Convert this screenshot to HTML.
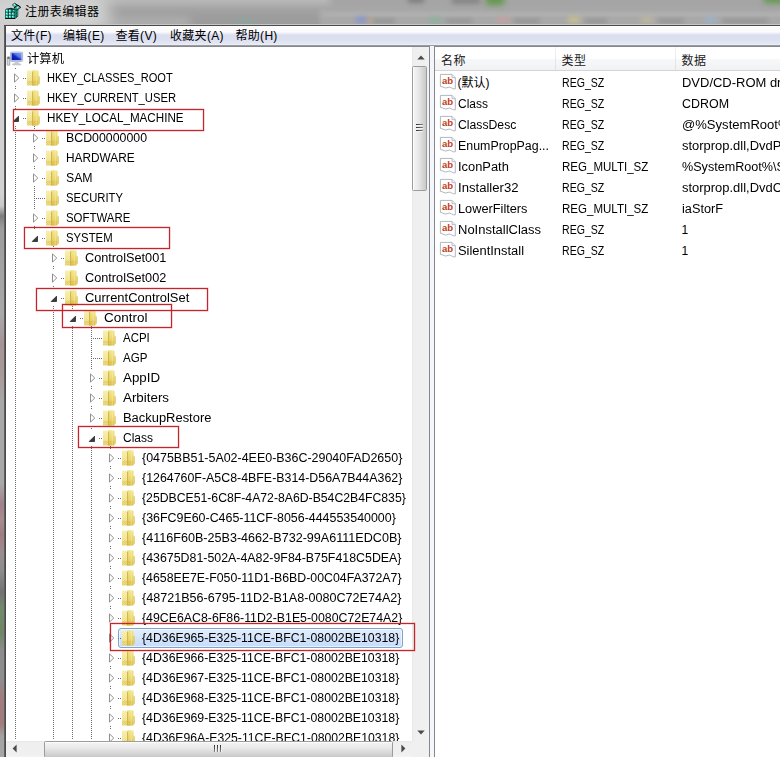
<!DOCTYPE html>
<html lang="zh-CN"><head><meta charset="utf-8"><title>注册表编辑器</title>
<style>
html,body{margin:0;padding:0}
body{width:780px;height:757px;position:relative;overflow:hidden;background:#fff;font:12px/20px 'Liberation Sans','Noto Sans CJK SC',sans-serif;color:#000}
div,span,svg{position:absolute;box-sizing:border-box}
.t{white-space:pre;height:20px;line-height:20px;transform-origin:0 0}
.rr{border:1px solid #c4242a;box-shadow:0 0 0 .4px rgba(196,36,42,.45),inset 0 0 0 .4px rgba(196,36,42,.3)}
.vd{width:1px;background:repeating-linear-gradient(to bottom,#6c6c6c 0 1px,transparent 1px 2px)}
.hd{height:1px;background:repeating-linear-gradient(to right,#6a6a6a 0 1px,transparent 1px 2px)}
</style></head><body>
<svg width="0" height="0" style="left:0;top:0"><defs>
<linearGradient id="fg1" x1="0" y1="0" x2="0" y2="1"><stop offset="0" stop-color="#f7eeae"/><stop offset=".6" stop-color="#f0e28c"/><stop offset="1" stop-color="#e2cb5e"/></linearGradient>
<linearGradient id="fg2" x1="0" y1="0" x2="0" y2="1"><stop offset="0" stop-color="#f3e68e"/><stop offset=".55" stop-color="#ead770"/><stop offset="1" stop-color="#d9bd48"/></linearGradient>
<pattern id="hatch" width="2" height="2" patternUnits="userSpaceOnUse"><rect width="1" height="1" fill="#fffbe0"/><rect x="1" y="1" width="1" height="1" fill="#fffbe0"/></pattern>
<linearGradient id="scr" x1="0" y1="1" x2="1" y2="0"><stop offset="0" stop-color="#0614a8"/><stop offset="0.45" stop-color="#1428c4"/><stop offset="0.6" stop-color="#5674e0"/><stop offset="1" stop-color="#86a2f0"/></linearGradient>
<symbol id="folder" viewBox="0 0 16 18">
 <path d="M2 1.6h5.6v14.8h-5.6z" fill="url(#fg1)"/>
 <path d="M2 1.6h5.6v14.8h-5.6z" fill="url(#hatch)" opacity=".25"/>
 <path d="M7.5 1.1l5.2.4q.9.1.9 1v13q0 .9-.9 1l-5.2.3z" fill="url(#fg2)"/>
 <path d="M13.4 6.8q1.4.1 1.4 1.3v6.200q0 1.100-1.4 1.200z" fill="#e3c85c"/>
 <path d="M7.6 2.500v14" stroke="#cfae3c" stroke-width="1" opacity=".9"/>
 <path d="M2.300 12.900h11.200" stroke="#d2b23e" stroke-width="1" opacity=".45"/>
 <path d="M11.300 2v14.400" stroke="#faf3c4" stroke-width=".8" opacity=".5"/>
</symbol>
<symbol id="tc" viewBox="0 0 8 10"><path d="M1.5 .9v8.2l4.3-4.1z" fill="#fff" stroke="#909090" stroke-width="1"/></symbol>
<symbol id="te" viewBox="0 0 8 8"><path d="M6.5 1.2v5.3h-5.3z" fill="#3c3c3c" stroke="#262626" stroke-width=".8"/></symbol>
</defs></svg>
<div style="left:0;top:0;width:780px;height:26px;background:linear-gradient(to bottom,#b8b8b8 0,#b0b0b0 4px,#a4a4a4 9px,#9e9e9e 15px,#9b9b9b 24px)"></div><div style="left:320px;top:11px;width:480px;height:8px;background:#b4b4b4;filter:blur(3px)"></div><div style="left:320px;top:18px;width:480px;height:8px;background:#a9a9a9;filter:blur(2px)"></div><div style="left:330px;top:-5px;width:470px;height:13px;background:#a4a4a4;filter:blur(3px)"></div><div style="left:100px;top:17px;width:90px;height:10px;background:#b0b0b0;filter:blur(4px)"></div><div style="left:356px;top:17px;width:12px;height:6px;background:#7f92d8;filter:blur(2.500px);opacity:.8"></div><div style="left:373px;top:18.500px;width:22px;height:4px;background:#8c8c8c;filter:blur(2px);opacity:.75"></div><div style="left:429px;top:17px;width:12px;height:6px;background:#86b49a;filter:blur(2.500px);opacity:.8"></div><div style="left:446px;top:18.500px;width:26px;height:4px;background:#8c8c8c;filter:blur(2px);opacity:.75"></div><div style="left:497px;top:17px;width:12px;height:6px;background:#cfa0a0;filter:blur(2.500px);opacity:.8"></div><div style="left:514px;top:18.500px;width:26px;height:4px;background:#8c8c8c;filter:blur(2px);opacity:.75"></div><div style="left:568px;top:17px;width:12px;height:6px;background:#d2c48c;filter:blur(2.500px);opacity:.8"></div><div style="left:585px;top:18.500px;width:22px;height:4px;background:#8c8c8c;filter:blur(2px);opacity:.75"></div><div style="left:641px;top:17px;width:12px;height:6px;background:#c4bc9c;filter:blur(2.500px);opacity:.8"></div><div style="left:658px;top:18.500px;width:26px;height:4px;background:#8c8c8c;filter:blur(2px);opacity:.75"></div><div style="left:705px;top:17px;width:12px;height:6px;background:#9cb4cc;filter:blur(2.500px);opacity:.8"></div><div style="left:722px;top:18.500px;width:46px;height:4px;background:#8c8c8c;filter:blur(2px);opacity:.75"></div><div style="left:366px;top:18px;width:6px;height:5px;background:#c8a078;filter:blur(2px);opacity:.7"></div><div style="left:236px;top:19px;width:18px;height:6px;background:#88a8a0;filter:blur(3px);opacity:.8"></div><div style="left:486px;top:-6px;width:18px;height:11px;background:#62984a;filter:blur(3px)"></div><div style="left:764px;top:-6px;width:30px;height:9px;background:#62984a;filter:blur(3px)"></div><div style="left:408px;top:-5px;width:16px;height:8px;background:#808080;filter:blur(2.500px)"></div><div style="left:452px;top:-3px;width:28px;height:7px;background:#858585;filter:blur(2.500px)"></div><div style="left:-20px;top:-6px;width:130px;height:40px;background:#d6d6d6;filter:blur(8px);opacity:.95;border-radius:20px"></div><div style="left:0;top:24px;width:780px;height:1px;background:#c6c6c6"></div><div style="left:0;top:24px;width:5px;height:733px;background:linear-gradient(to bottom,#cfcfcf 0,#d2d2d2 170px,#c8c8c8 182px,#7c7c7c 192px,#9c9c9c 204px,#a9a9a9 290px,#a49496 320px,#a99a9a 350px,#a8a8a8 380px,#a8a8a8 460px,#a0808a 480px,#a88c90 495px,#a07c84 510px,#9c8c8e 528px,#8e8e8e 545px,#727272 568px,#728a6a 585px,#6e8666 610px,#8c8c8c 625px,#8e8e8e 655px,#a07e7e 672px,#a07c7c 700px,#a2a2a2 712px,#a6a6a6 733px)"></div><div style="left:4px;top:25px;width:2px;height:732px;background:linear-gradient(to right,#6a6a6a,#3f3f3f)"></div><div style="left:4px;top:25px;width:776px;height:1px;background:#4a4a4a"></div><svg style="left:2px;top:1px" width="20" height="20" viewBox="0 0 20 20">
<path d="M3.200 9.400Q3.200 7.800 5 7.500L9.200 6.700 12.600 8 16.200 6.800V15.300L12.900 17.900H3.200Z" fill="#06322e"/>
<path d="M3.200 17.300H12.900V18H3.200Z" fill="#000"/>
<rect x="3.9" y="8.7" width="2.4" height="2.3" fill="#2fc4b0"/><path d="M3.9 10.399999999999999L5.8 8.7h-1.900z" fill="#b9fff2"/><rect x="7.0" y="8.7" width="2.4" height="2.3" fill="#2fc4b0"/><path d="M7.0 10.399999999999999L8.9 8.7h-1.900z" fill="#b9fff2"/><rect x="3.9" y="11.7" width="2.4" height="2.3" fill="#2fc4b0"/><path d="M3.9 13.399999999999999L5.8 11.7h-1.900z" fill="#b9fff2"/><rect x="7.0" y="11.7" width="2.4" height="2.3" fill="#2fc4b0"/><path d="M7.0 13.399999999999999L8.9 11.7h-1.900z" fill="#b9fff2"/><rect x="10.1" y="11.7" width="2.4" height="2.3" fill="#2fc4b0"/><path d="M10.1 13.399999999999999L12.0 11.7h-1.900z" fill="#b9fff2"/><rect x="3.9" y="14.7" width="2.4" height="2.3" fill="#2fc4b0"/><path d="M3.9 16.4L5.8 14.7h-1.900z" fill="#b9fff2"/><rect x="7.0" y="14.7" width="2.4" height="2.3" fill="#2fc4b0"/><path d="M7.0 16.4L8.9 14.7h-1.900z" fill="#b9fff2"/><rect x="10.1" y="14.7" width="2.4" height="2.3" fill="#2fc4b0"/><path d="M10.1 16.4L12.0 14.7h-1.900z" fill="#b9fff2"/>
<path d="M10.100 8.600h2.600v2.400h-2.600z" fill="#1a7c6c"/><path d="M10.900 9.300l1.400 1.300v-1.500z" fill="#d6fff8"/>
<path d="M13.200 8.800L15.900 7.600V15.100L13.200 17.200Z" fill="#27957f"/>
<path d="M14.500 8.200V16.300" stroke="#0a433e" stroke-width=".8" stroke-dasharray="2.300 .7"/>
<path d="M10.300 3.900L12.700 2.200 15.300 4.300 13 6.300Z" fill="#55e2cb" stroke="#052a27" stroke-width=".7"/>
<path d="M11.400 3.900l1.300-.9.800.7z" fill="#d6fff8"/>
<path d="M12.200 7.600L13 6.300 15.400 4.300 18.700 6.500 16.200 8.300 16 8.600 13.300 9Z" fill="#2aa18c" stroke="#052a27" stroke-width=".7"/>
<path d="M14.400 6.700l1.700-1.500 1 .700-1.700 1.500z" fill="#a8f5e6"/>
<path d="M13.300 2.800l2.300 1.700M15.700 3.900l3 2.300M11.700 7.200l2-1.800" stroke="#000" stroke-width=".9" fill="none"/>
</svg><span class="t" style="left:25px;top:2px;letter-spacing:.4px">注册表编辑器</span><div style="left:6px;top:26px;width:774px;height:20px;background:linear-gradient(to bottom,#fdfdfe 0,#fbfbfd 6px,#e9ecf6 7.500px,#dadeef 9px,#dbdff0 13px,#e2e6f3 17px,#eceef7 19px,#9c9c9c 19px,#9c9c9c 20px)"></div><span class="t" style="left:11px;top:26px;letter-spacing:.3px">文件(F)</span><span class="t" style="left:63px;top:26px;letter-spacing:.3px">编辑(E)</span><span class="t" style="left:115.5px;top:26px;letter-spacing:.3px">查看(V)</span><span class="t" style="left:170px;top:26px;letter-spacing:.3px">收藏夹(A)</span><span class="t" style="left:235.5px;top:26px;letter-spacing:.3px">帮助(H)</span><div style="left:6px;top:46px;width:774px;height:711px;background:#f5f6fa"></div><div style="left:6px;top:46px;width:424px;height:712px;background:#fff;border:1px solid #828790;border-left:none;border-bottom:none"></div><div style="left:434px;top:46px;width:350px;height:712px;background:#fff;border:1px solid #828790"></div><div class="vd" style="left:15px;top:68px;height:672px"></div><div class="vd" style="left:34px;top:126px;height:112px"></div><div class="vd" style="left:53px;top:246px;height:494px"></div><div class="vd" style="left:72px;top:306px;height:434px"></div><div class="vd" style="left:91px;top:326px;height:414px"></div><div class="vd" style="left:110px;top:446px;height:294px"></div><div style="left:118px;top:628px;width:285px;height:20px;border:1px solid #7da2ce;border-radius:3px;background:linear-gradient(to bottom,#e3eefc,#c6dcfb);box-shadow:inset 0 0 0 1px rgba(255,255,255,.6)"></div><svg style="left:6px;top:50.8px" width="18" height="16" viewBox="0 0 18 16">
<rect x="4.6" y="1.1" width="12" height="9.3" rx=".8" fill="#dfe7f7" stroke="#93a4c8" stroke-width=".8"/>
<rect x="5.6" y="2" width="10" height="7.2" fill="url(#scr)"/>
<path d="M9 10.6h3.4l.6 2.2h-4.6z" fill="#c9ccd2"/><path d="M7.2 12.8h7q.6 0 .6.7v.4h-8.2v-.4q0-.7.6-.7z" fill="#d8dade" stroke="#a9adb6" stroke-width=".5"/>
<rect x="1.2" y="5.8" width="2.6" height="8.4" rx=".5" fill="#d4d6da" stroke="#8e9299" stroke-width=".7"/>
<rect x="1.5" y="6.2" width="2" height="1.5" fill="#3c5c3c"/>
</svg><span class="t" style="left:27px;top:48.5px;transform:scaleX(1.0273);">计算机</span><div class="hd" style="left:23px;top:78px;width:3px"></div><div style="left:11px;top:70px;width:10px;height:16px;background:#fff"></div><svg style="left:13px;top:73px" width="8" height="10"><use href="#tc"/></svg><svg style="left:25px;top:69px" width="16" height="18"><use href="#folder"/></svg><span class="t" style="left:46.7px;top:68px;transform:scaleX(0.9238);">HKEY_CLASSES_ROOT</span><div class="hd" style="left:23px;top:98px;width:3px"></div><div style="left:11px;top:90px;width:10px;height:16px;background:#fff"></div><svg style="left:13px;top:93px" width="8" height="10"><use href="#tc"/></svg><svg style="left:25px;top:89px" width="16" height="18"><use href="#folder"/></svg><span class="t" style="left:46.7px;top:88px;transform:scaleX(0.9346);">HKEY_CURRENT_USER</span><div class="hd" style="left:23px;top:118px;width:3px"></div><div style="left:11px;top:110px;width:10px;height:16px;background:#fff"></div><svg style="left:12px;top:115px" width="8" height="8"><use href="#te"/></svg><svg style="left:25px;top:109px" width="16" height="18"><use href="#folder"/></svg><span class="t" style="left:46.7px;top:108px;transform:scaleX(0.9707);">HKEY_LOCAL_MACHINE</span><div class="hd" style="left:42px;top:138px;width:3px"></div><div style="left:30px;top:130px;width:10px;height:16px;background:#fff"></div><svg style="left:32px;top:133px" width="8" height="10"><use href="#tc"/></svg><svg style="left:44px;top:129px" width="16" height="18"><use href="#folder"/></svg><span class="t" style="left:66px;top:128px;transform:scaleX(1.0288);">BCD00000000</span><div class="hd" style="left:42px;top:158px;width:3px"></div><div style="left:30px;top:150px;width:10px;height:16px;background:#fff"></div><svg style="left:32px;top:153px" width="8" height="10"><use href="#tc"/></svg><svg style="left:44px;top:149px" width="16" height="18"><use href="#folder"/></svg><span class="t" style="left:66px;top:148px;transform:scaleX(0.9862);">HARDWARE</span><div class="hd" style="left:42px;top:178px;width:3px"></div><div style="left:30px;top:170px;width:10px;height:16px;background:#fff"></div><svg style="left:32px;top:173px" width="8" height="10"><use href="#tc"/></svg><svg style="left:44px;top:169px" width="16" height="18"><use href="#folder"/></svg><span class="t" style="left:66px;top:168px;transform:scaleX(1.0225);">SAM</span><div class="hd" style="left:34px;top:198px;width:11px"></div><svg style="left:44px;top:189px" width="16" height="18"><use href="#folder"/></svg><span class="t" style="left:66px;top:188px;transform:scaleX(0.9392);">SECURITY</span><div class="hd" style="left:42px;top:218px;width:3px"></div><div style="left:30px;top:210px;width:10px;height:16px;background:#fff"></div><svg style="left:32px;top:213px" width="8" height="10"><use href="#tc"/></svg><svg style="left:44px;top:209px" width="16" height="18"><use href="#folder"/></svg><span class="t" style="left:66px;top:208px;transform:scaleX(0.9517);">SOFTWARE</span><div class="hd" style="left:42px;top:238px;width:3px"></div><div style="left:30px;top:230px;width:10px;height:16px;background:#fff"></div><svg style="left:31px;top:235px" width="8" height="8"><use href="#te"/></svg><svg style="left:44px;top:229px" width="16" height="18"><use href="#folder"/></svg><span class="t" style="left:66px;top:228px;transform:scaleX(0.9444);">SYSTEM</span><div class="hd" style="left:61px;top:258px;width:3px"></div><div style="left:49px;top:250px;width:10px;height:16px;background:#fff"></div><svg style="left:51px;top:253px" width="8" height="10"><use href="#tc"/></svg><svg style="left:63px;top:249px" width="16" height="18"><use href="#folder"/></svg><span class="t" style="left:85px;top:248px;transform:scaleX(1.0597);">ControlSet001</span><div class="hd" style="left:61px;top:278px;width:3px"></div><div style="left:49px;top:270px;width:10px;height:16px;background:#fff"></div><svg style="left:51px;top:273px" width="8" height="10"><use href="#tc"/></svg><svg style="left:63px;top:269px" width="16" height="18"><use href="#folder"/></svg><span class="t" style="left:85px;top:268px;transform:scaleX(1.0597);">ControlSet002</span><div class="hd" style="left:61px;top:298px;width:3px"></div><div style="left:49px;top:290px;width:10px;height:16px;background:#fff"></div><svg style="left:50px;top:295px" width="8" height="8"><use href="#te"/></svg><svg style="left:63px;top:289px" width="16" height="18"><use href="#folder"/></svg><span class="t" style="left:85px;top:288px;transform:scaleX(1.0784);">CurrentControlSet</span><div class="hd" style="left:80px;top:318px;width:3px"></div><div style="left:68px;top:310px;width:10px;height:16px;background:#fff"></div><svg style="left:69px;top:315px" width="8" height="8"><use href="#te"/></svg><svg style="left:82px;top:309px" width="16" height="18"><use href="#folder"/></svg><span class="t" style="left:104px;top:308px;transform:scaleX(1.1218);">Control</span><div class="hd" style="left:91px;top:338px;width:11px"></div><svg style="left:101px;top:329px" width="16" height="18"><use href="#folder"/></svg><span class="t" style="left:123px;top:328px;transform:scaleX(0.953);">ACPI</span><div class="hd" style="left:91px;top:358px;width:11px"></div><svg style="left:101px;top:349px" width="16" height="18"><use href="#folder"/></svg><span class="t" style="left:123px;top:348px;transform:scaleX(0.9628);">AGP</span><div class="hd" style="left:99px;top:378px;width:3px"></div><div style="left:87px;top:370px;width:10px;height:16px;background:#fff"></div><svg style="left:89px;top:373px" width="8" height="10"><use href="#tc"/></svg><svg style="left:101px;top:369px" width="16" height="18"><use href="#folder"/></svg><span class="t" style="left:123px;top:368px;transform:scaleX(1.1091);">AppID</span><div class="hd" style="left:99px;top:398px;width:3px"></div><div style="left:87px;top:390px;width:10px;height:16px;background:#fff"></div><svg style="left:89px;top:393px" width="8" height="10"><use href="#tc"/></svg><svg style="left:101px;top:389px" width="16" height="18"><use href="#folder"/></svg><span class="t" style="left:123px;top:388px;transform:scaleX(1.1126);">Arbiters</span><div class="hd" style="left:99px;top:418px;width:3px"></div><div style="left:87px;top:410px;width:10px;height:16px;background:#fff"></div><svg style="left:89px;top:413px" width="8" height="10"><use href="#tc"/></svg><svg style="left:101px;top:409px" width="16" height="18"><use href="#folder"/></svg><span class="t" style="left:123px;top:408px;transform:scaleX(1.0774);">BackupRestore</span><div class="hd" style="left:99px;top:438px;width:3px"></div><div style="left:87px;top:430px;width:10px;height:16px;background:#fff"></div><svg style="left:88px;top:435px" width="8" height="8"><use href="#te"/></svg><svg style="left:101px;top:429px" width="16" height="18"><use href="#folder"/></svg><span class="t" style="left:123px;top:428px;transform:scaleX(0.9995);">Class</span><div class="hd" style="left:118px;top:458px;width:3px"></div><div style="left:106px;top:450px;width:10px;height:16px;background:#fff"></div><svg style="left:108px;top:453px" width="8" height="10"><use href="#tc"/></svg><svg style="left:120px;top:449px" width="16" height="18"><use href="#folder"/></svg><span class="t" style="left:142px;top:448px;transform:scaleX(1.0376);">{0475BB51-5A02-4EE0-B36C-29040FAD2650}</span><div class="hd" style="left:118px;top:478px;width:3px"></div><div style="left:106px;top:470px;width:10px;height:16px;background:#fff"></div><svg style="left:108px;top:473px" width="8" height="10"><use href="#tc"/></svg><svg style="left:120px;top:469px" width="16" height="18"><use href="#folder"/></svg><span class="t" style="left:142px;top:468px;transform:scaleX(1.0322);">{1264760F-A5C8-4BFE-B314-D56A7B44A362}</span><div class="hd" style="left:118px;top:498px;width:3px"></div><div style="left:106px;top:490px;width:10px;height:16px;background:#fff"></div><svg style="left:108px;top:493px" width="8" height="10"><use href="#tc"/></svg><svg style="left:120px;top:489px" width="16" height="18"><use href="#folder"/></svg><span class="t" style="left:142px;top:488px;transform:scaleX(1.0193);">{25DBCE51-6C8F-4A72-8A6D-B54C2B4FC835}</span><div class="hd" style="left:118px;top:518px;width:3px"></div><div style="left:106px;top:510px;width:10px;height:16px;background:#fff"></div><svg style="left:108px;top:513px" width="8" height="10"><use href="#tc"/></svg><svg style="left:120px;top:509px" width="16" height="18"><use href="#folder"/></svg><span class="t" style="left:142px;top:508px;transform:scaleX(1.0347);">{36FC9E60-C465-11CF-8056-444553540000}</span><div class="hd" style="left:118px;top:538px;width:3px"></div><div style="left:106px;top:530px;width:10px;height:16px;background:#fff"></div><svg style="left:108px;top:533px" width="8" height="10"><use href="#tc"/></svg><svg style="left:120px;top:529px" width="16" height="18"><use href="#folder"/></svg><span class="t" style="left:142px;top:528px;transform:scaleX(1.0484);">{4116F60B-25B3-4662-B732-99A6111EDC0B}</span><div class="hd" style="left:118px;top:558px;width:3px"></div><div style="left:106px;top:550px;width:10px;height:16px;background:#fff"></div><svg style="left:108px;top:553px" width="8" height="10"><use href="#tc"/></svg><svg style="left:120px;top:549px" width="16" height="18"><use href="#folder"/></svg><span class="t" style="left:142px;top:548px;transform:scaleX(1.0317);">{43675D81-502A-4A82-9F84-B75F418C5DEA}</span><div class="hd" style="left:118px;top:578px;width:3px"></div><div style="left:106px;top:570px;width:10px;height:16px;background:#fff"></div><svg style="left:108px;top:573px" width="8" height="10"><use href="#tc"/></svg><svg style="left:120px;top:569px" width="16" height="18"><use href="#folder"/></svg><span class="t" style="left:142px;top:568px;transform:scaleX(1.0273);">{4658EE7E-F050-11D1-B6BD-00C04FA372A7}</span><div class="hd" style="left:118px;top:598px;width:3px"></div><div style="left:106px;top:590px;width:10px;height:16px;background:#fff"></div><svg style="left:108px;top:593px" width="8" height="10"><use href="#tc"/></svg><svg style="left:120px;top:589px" width="16" height="18"><use href="#folder"/></svg><span class="t" style="left:142px;top:588px;transform:scaleX(1.0493);">{48721B56-6795-11D2-B1A8-0080C72E74A2}</span><div class="hd" style="left:118px;top:618px;width:3px"></div><div style="left:106px;top:610px;width:10px;height:16px;background:#fff"></div><svg style="left:108px;top:613px" width="8" height="10"><use href="#tc"/></svg><svg style="left:120px;top:609px" width="16" height="18"><use href="#folder"/></svg><span class="t" style="left:142px;top:608px;transform:scaleX(1.0277);">{49CE6AC8-6F86-11D2-B1E5-0080C72E74A2}</span><div class="hd" style="left:118px;top:638px;width:3px"></div><div style="left:106px;top:630px;width:10px;height:16px;background:#fff"></div><svg style="left:108px;top:633px" width="8" height="10"><use href="#tc"/></svg><svg style="left:120px;top:629px" width="16" height="18"><use href="#folder"/></svg><span class="t" style="left:142px;top:628px;transform:scaleX(1.0239);">{4D36E965-E325-11CE-BFC1-08002BE10318}</span><div class="hd" style="left:118px;top:658px;width:3px"></div><div style="left:106px;top:650px;width:10px;height:16px;background:#fff"></div><svg style="left:108px;top:653px" width="8" height="10"><use href="#tc"/></svg><svg style="left:120px;top:649px" width="16" height="18"><use href="#folder"/></svg><span class="t" style="left:142px;top:648px;transform:scaleX(1.0239);">{4D36E966-E325-11CE-BFC1-08002BE10318}</span><div class="hd" style="left:118px;top:678px;width:3px"></div><div style="left:106px;top:670px;width:10px;height:16px;background:#fff"></div><svg style="left:108px;top:673px" width="8" height="10"><use href="#tc"/></svg><svg style="left:120px;top:669px" width="16" height="18"><use href="#folder"/></svg><span class="t" style="left:142px;top:668px;transform:scaleX(1.0239);">{4D36E967-E325-11CE-BFC1-08002BE10318}</span><div class="hd" style="left:118px;top:698px;width:3px"></div><div style="left:106px;top:690px;width:10px;height:16px;background:#fff"></div><svg style="left:108px;top:693px" width="8" height="10"><use href="#tc"/></svg><svg style="left:120px;top:689px" width="16" height="18"><use href="#folder"/></svg><span class="t" style="left:142px;top:688px;transform:scaleX(1.0239);">{4D36E968-E325-11CE-BFC1-08002BE10318}</span><div class="hd" style="left:118px;top:718px;width:3px"></div><div style="left:106px;top:710px;width:10px;height:16px;background:#fff"></div><svg style="left:108px;top:713px" width="8" height="10"><use href="#tc"/></svg><svg style="left:120px;top:709px" width="16" height="18"><use href="#folder"/></svg><span class="t" style="left:142px;top:708px;transform:scaleX(1.0239);">{4D36E969-E325-11CE-BFC1-08002BE10318}</span><div class="hd" style="left:118px;top:738px;width:3px"></div><div style="left:106px;top:730px;width:10px;height:16px;background:#fff"></div><svg style="left:108px;top:733px" width="8" height="10"><use href="#tc"/></svg><svg style="left:120px;top:729px" width="16" height="18"><use href="#folder"/></svg><span class="t" style="left:142px;top:728px;transform:scaleX(1.0185);">{4D36E96A-E325-11CE-BFC1-08002BE10318}</span><div style="left:412px;top:47px;width:17px;height:694px;background:linear-gradient(to right,#e8e8e8,#efefef 2px,#f0f0f0 14px,#f3f3f3)"></div><svg style="left:417px;top:55px" width="8" height="5" viewBox="0 0 8 5"><path d="M.3 4.500L4 .6 7.700 4.500z" fill="#4a4a4a"/></svg><svg style="left:417px;top:730px" width="8" height="5" viewBox="0 0 8 5"><path d="M.3 .5L4 4.400 7.700 .5z" fill="#4a4a4a"/></svg><div style="left:412px;top:66px;width:15px;height:125px;border:1px solid #9c9c9c;border-radius:1.500px;background:linear-gradient(to right,#f5f5f5,#e9e9e9 40%,#d6d6d6 75%,#c9c9c9);box-shadow:inset 1px 0 0 rgba(255,255,255,.7)"></div><div style="left:416px;top:124px;width:7px;height:2px;background:linear-gradient(to right,#2a2a2a,#8a8a8a);border-bottom:1px solid #f4f4f4"></div><div style="left:416px;top:127px;width:7px;height:2px;background:linear-gradient(to right,#2a2a2a,#8a8a8a);border-bottom:1px solid #f4f4f4"></div><div style="left:416px;top:130px;width:7px;height:2px;background:linear-gradient(to right,#2a2a2a,#8a8a8a);border-bottom:1px solid #f4f4f4"></div><div style="left:6px;top:741px;width:406px;height:16px;background:linear-gradient(to bottom,#e8e8e8,#efefef 2px,#f0f0f0 13px,#f3f3f3)"></div><svg style="left:12px;top:744px" width="5" height="9" viewBox="0 0 5 9"><path d="M4.600 .4L.6 4.500 4.600 8.600z" fill="#4a4a4a"/></svg><svg style="left:401px;top:744px" width="5" height="9" viewBox="0 0 5 9"><path d="M.4 .4L4.400 4.500 .4 8.600z" fill="#4a4a4a"/></svg><div style="left:44px;top:741px;width:349px;height:17px;border:1px solid #9c9c9c;border-radius:1.500px;background:linear-gradient(to bottom,#f5f5f5,#e9e9e9 40%,#d6d6d6 75%,#c9c9c9);box-shadow:inset 0 1px 0 rgba(255,255,255,.7)"></div><div style="left:214px;top:745px;width:2px;height:7px;background:linear-gradient(to bottom,#2a2a2a,#8a8a8a);border-right:1px solid #f4f4f4"></div><div style="left:217px;top:745px;width:2px;height:7px;background:linear-gradient(to bottom,#2a2a2a,#8a8a8a);border-right:1px solid #f4f4f4"></div><div style="left:220px;top:745px;width:2px;height:7px;background:linear-gradient(to bottom,#2a2a2a,#8a8a8a);border-right:1px solid #f4f4f4"></div><div style="left:412px;top:741px;width:17px;height:16px;background:#f0f0f0"></div><div style="left:435px;top:47px;width:345px;height:24px;background:linear-gradient(to bottom,#fff 0,#fff 50%,#f7f8fa 51%,#f1f2f4 100%);border-bottom:1px solid #d5d5d5"></div><div style="left:555px;top:47px;width:1px;height:23px;background:linear-gradient(to bottom,#f2f2f2,#dedfe1)"></div><div style="left:675px;top:47px;width:1px;height:23px;background:linear-gradient(to bottom,#f2f2f2,#dedfe1)"></div><span class="t" style="left:441px;top:50.600px;letter-spacing:.5px;color:#1a1a1a">名称</span><span class="t" style="left:561.5px;top:50.600px;letter-spacing:.5px;color:#1a1a1a">类型</span><span class="t" style="left:681.5px;top:50.600px;letter-spacing:.5px;color:#1a1a1a">数据</span><svg style="left:439px;top:73px" width="18" height="18" viewBox="0 0 18 18">
<path d="M1.4 1.4H13L16.3 4.7V15.9Q14.2 16.2 12.6 14.9 10.8 13.5 9 14.4 6.8 15.6 5 14.6 3.2 13.5 1.4 13.4Z" fill="#fff" stroke="#a9afb7" stroke-width=".9"/>
<path d="M13 1.4V4.7H16.3" fill="#f1f3f6" stroke="#a9afb7" stroke-width=".8"/>
<text x="2.9" y="10.8" font-family="Liberation Sans, sans-serif" font-weight="bold" font-size="9.6" fill="#c23f22" textLength="11.2" lengthAdjust="spacingAndGlyphs">ab</text>
</svg><span class="t" style="left:457.500px;top:73px;transform:scaleX(1.0);">(默认)</span><span class="t" style="left:561.700px;top:73px;transform:scaleX(0.881);">REG_SZ</span><span class="t" style="left:681.600px;top:73px;transform:scaleX(1.0808);">DVD/CD-ROM drives</span><svg style="left:439px;top:94px" width="18" height="18" viewBox="0 0 18 18">
<path d="M1.4 1.4H13L16.3 4.7V15.9Q14.2 16.2 12.6 14.9 10.8 13.5 9 14.4 6.8 15.6 5 14.6 3.2 13.5 1.4 13.4Z" fill="#fff" stroke="#a9afb7" stroke-width=".9"/>
<path d="M13 1.4V4.7H16.3" fill="#f1f3f6" stroke="#a9afb7" stroke-width=".8"/>
<text x="2.9" y="10.8" font-family="Liberation Sans, sans-serif" font-weight="bold" font-size="9.6" fill="#c23f22" textLength="11.2" lengthAdjust="spacingAndGlyphs">ab</text>
</svg><span class="t" style="left:457.500px;top:94px;transform:scaleX(0.9995);">Class</span><span class="t" style="left:561.700px;top:94px;transform:scaleX(0.881);">REG_SZ</span><span class="t" style="left:681.600px;top:94px;transform:scaleX(1.0369);">CDROM</span><svg style="left:439px;top:115px" width="18" height="18" viewBox="0 0 18 18">
<path d="M1.4 1.4H13L16.3 4.7V15.9Q14.2 16.2 12.6 14.9 10.8 13.5 9 14.4 6.8 15.6 5 14.6 3.2 13.5 1.4 13.4Z" fill="#fff" stroke="#a9afb7" stroke-width=".9"/>
<path d="M13 1.4V4.7H16.3" fill="#f1f3f6" stroke="#a9afb7" stroke-width=".8"/>
<text x="2.9" y="10.8" font-family="Liberation Sans, sans-serif" font-weight="bold" font-size="9.6" fill="#c23f22" textLength="11.2" lengthAdjust="spacingAndGlyphs">ab</text>
</svg><span class="t" style="left:457.500px;top:115px;transform:scaleX(1.0181);">ClassDesc</span><span class="t" style="left:561.700px;top:115px;transform:scaleX(0.881);">REG_SZ</span><span class="t" style="left:681.600px;top:115px;transform:scaleX(1.0882);">@%SystemRoot%\System32\StorProp.dll,-17001</span><svg style="left:439px;top:136px" width="18" height="18" viewBox="0 0 18 18">
<path d="M1.4 1.4H13L16.3 4.7V15.9Q14.2 16.2 12.6 14.9 10.8 13.5 9 14.4 6.8 15.6 5 14.6 3.2 13.5 1.4 13.4Z" fill="#fff" stroke="#a9afb7" stroke-width=".9"/>
<path d="M13 1.4V4.7H16.3" fill="#f1f3f6" stroke="#a9afb7" stroke-width=".8"/>
<text x="2.9" y="10.8" font-family="Liberation Sans, sans-serif" font-weight="bold" font-size="9.6" fill="#c23f22" textLength="11.2" lengthAdjust="spacingAndGlyphs">ab</text>
</svg><span class="t" style="left:457.500px;top:136px;transform:scaleX(1.0334);">EnumPropPag...</span><span class="t" style="left:561.700px;top:136px;transform:scaleX(0.881);">REG_SZ</span><span class="t" style="left:681.600px;top:136px;transform:scaleX(1.0792);">storprop.dll,DvdPropPageProvider</span><svg style="left:439px;top:157px" width="18" height="18" viewBox="0 0 18 18">
<path d="M1.4 1.4H13L16.3 4.7V15.9Q14.2 16.2 12.6 14.9 10.8 13.5 9 14.4 6.8 15.6 5 14.6 3.2 13.5 1.4 13.4Z" fill="#fff" stroke="#a9afb7" stroke-width=".9"/>
<path d="M13 1.4V4.7H16.3" fill="#f1f3f6" stroke="#a9afb7" stroke-width=".8"/>
<text x="2.9" y="10.8" font-family="Liberation Sans, sans-serif" font-weight="bold" font-size="9.6" fill="#c23f22" textLength="11.2" lengthAdjust="spacingAndGlyphs">ab</text>
</svg><span class="t" style="left:457.500px;top:157px;transform:scaleX(1.0723);">IconPath</span><span class="t" style="left:561.700px;top:157px;transform:scaleX(0.9611);">REG_MULTI_SZ</span><span class="t" style="left:681.600px;top:157px;transform:scaleX(1.0496);">%SystemRoot%\System32\imageres.dll,-30</span><svg style="left:439px;top:178px" width="18" height="18" viewBox="0 0 18 18">
<path d="M1.4 1.4H13L16.3 4.7V15.9Q14.2 16.2 12.6 14.9 10.8 13.5 9 14.4 6.8 15.6 5 14.6 3.2 13.5 1.4 13.4Z" fill="#fff" stroke="#a9afb7" stroke-width=".9"/>
<path d="M13 1.4V4.7H16.3" fill="#f1f3f6" stroke="#a9afb7" stroke-width=".8"/>
<text x="2.9" y="10.8" font-family="Liberation Sans, sans-serif" font-weight="bold" font-size="9.6" fill="#c23f22" textLength="11.2" lengthAdjust="spacingAndGlyphs">ab</text>
</svg><span class="t" style="left:457.500px;top:178px;transform:scaleX(1.0926);">Installer32</span><span class="t" style="left:561.700px;top:178px;transform:scaleX(0.881);">REG_SZ</span><span class="t" style="left:681.600px;top:178px;transform:scaleX(1.0792);">storprop.dll,DvdClassInstaller</span><svg style="left:439px;top:199px" width="18" height="18" viewBox="0 0 18 18">
<path d="M1.4 1.4H13L16.3 4.7V15.9Q14.2 16.2 12.6 14.9 10.8 13.5 9 14.4 6.8 15.6 5 14.6 3.2 13.5 1.4 13.4Z" fill="#fff" stroke="#a9afb7" stroke-width=".9"/>
<path d="M13 1.4V4.7H16.3" fill="#f1f3f6" stroke="#a9afb7" stroke-width=".8"/>
<text x="2.9" y="10.8" font-family="Liberation Sans, sans-serif" font-weight="bold" font-size="9.6" fill="#c23f22" textLength="11.2" lengthAdjust="spacingAndGlyphs">ab</text>
</svg><span class="t" style="left:457.500px;top:199px;transform:scaleX(1.0634);">LowerFilters</span><span class="t" style="left:561.700px;top:199px;transform:scaleX(0.9611);">REG_MULTI_SZ</span><span class="t" style="left:681.600px;top:199px;transform:scaleX(1.0598);">iaStorF</span><svg style="left:439px;top:220px" width="18" height="18" viewBox="0 0 18 18">
<path d="M1.4 1.4H13L16.3 4.7V15.9Q14.2 16.2 12.6 14.9 10.8 13.5 9 14.4 6.8 15.6 5 14.6 3.2 13.5 1.4 13.4Z" fill="#fff" stroke="#a9afb7" stroke-width=".9"/>
<path d="M13 1.4V4.7H16.3" fill="#f1f3f6" stroke="#a9afb7" stroke-width=".8"/>
<text x="2.9" y="10.8" font-family="Liberation Sans, sans-serif" font-weight="bold" font-size="9.6" fill="#c23f22" textLength="11.2" lengthAdjust="spacingAndGlyphs">ab</text>
</svg><span class="t" style="left:457.500px;top:220px;transform:scaleX(1.0821);">NoInstallClass</span><span class="t" style="left:561.700px;top:220px;transform:scaleX(0.881);">REG_SZ</span><span class="t" style="left:681.600px;top:220px;">1</span><svg style="left:439px;top:241px" width="18" height="18" viewBox="0 0 18 18">
<path d="M1.4 1.4H13L16.3 4.7V15.9Q14.2 16.2 12.6 14.9 10.8 13.5 9 14.4 6.8 15.6 5 14.6 3.2 13.5 1.4 13.4Z" fill="#fff" stroke="#a9afb7" stroke-width=".9"/>
<path d="M13 1.4V4.7H16.3" fill="#f1f3f6" stroke="#a9afb7" stroke-width=".8"/>
<text x="2.9" y="10.8" font-family="Liberation Sans, sans-serif" font-weight="bold" font-size="9.6" fill="#c23f22" textLength="11.2" lengthAdjust="spacingAndGlyphs">ab</text>
</svg><span class="t" style="left:457.500px;top:241px;transform:scaleX(1.0754);">SilentInstall</span><span class="t" style="left:561.700px;top:241px;transform:scaleX(0.881);">REG_SZ</span><span class="t" style="left:681.600px;top:241px;">1</span><div class="rr" style="left:13px;top:109px;width:191px;height:22px"></div><div class="rr" style="left:24px;top:227px;width:146px;height:22px"></div><div class="rr" style="left:36px;top:288px;width:172px;height:23px"></div><div class="rr" style="left:62px;top:304px;width:110px;height:24px"></div><div class="rr" style="left:78px;top:426px;width:101px;height:22px"></div><div class="rr" style="left:110px;top:623px;width:305px;height:28px"></div></body></html>
